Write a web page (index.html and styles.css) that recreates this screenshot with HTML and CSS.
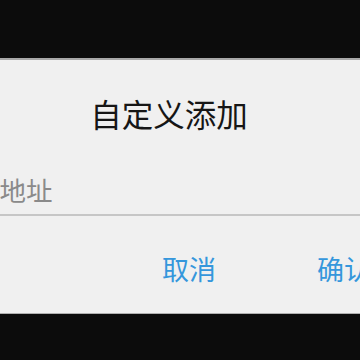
FILE: index.html
```html
<!DOCTYPE html>
<html lang="zh">
<head>
<meta charset="utf-8">
<link rel="stylesheet" href="styles.css">
</head>
<body>
<div class="dialog">
  <div class="title">自定义添加</div>
  <div class="field"><span class="hint">请输入地址</span></div>
  <div class="actions">
    <span class="btn">取消</span>
    <span class="btn">确认</span>
  </div>
</div>
</body>
</html>
```
FILE: styles.css
```css
html, body {
  margin: 0;
  padding: 0;
  width: 360px;
  height: 360px;
  overflow: hidden;
  background: #0c0c0c;
}
body {
  font-family: "Noto Sans CJK SC", "Noto Sans", sans-serif;
}
.dialog {
  margin: 58px 0 0 -101px;
  width: 540px;
  display: flex;
  flex-direction: column;
  background: #f0f0f0;
  border-top: 2px solid #a9a9a9;
  border-bottom: 1px solid #b0b0b0;
}
.title {
  height: 107px;
  line-height: 106px;
  font-size: 31.5px;
  color: #161616;
  text-align: center;
}
.field {
  height: 47px;
  line-height: 45px;
  padding-left: 21px;
  font-size: 26.5px;
  color: #8a8a8a;
  border-bottom: 2px solid #c6c6c6;
}
.actions {
  height: 88px;
  line-height: 88px;
  padding: 9px 68px 0 0;
  display: flex;
  justify-content: flex-end;
  gap: 101px;
  font-size: 27px;
  color: #3597dc;
}
```
